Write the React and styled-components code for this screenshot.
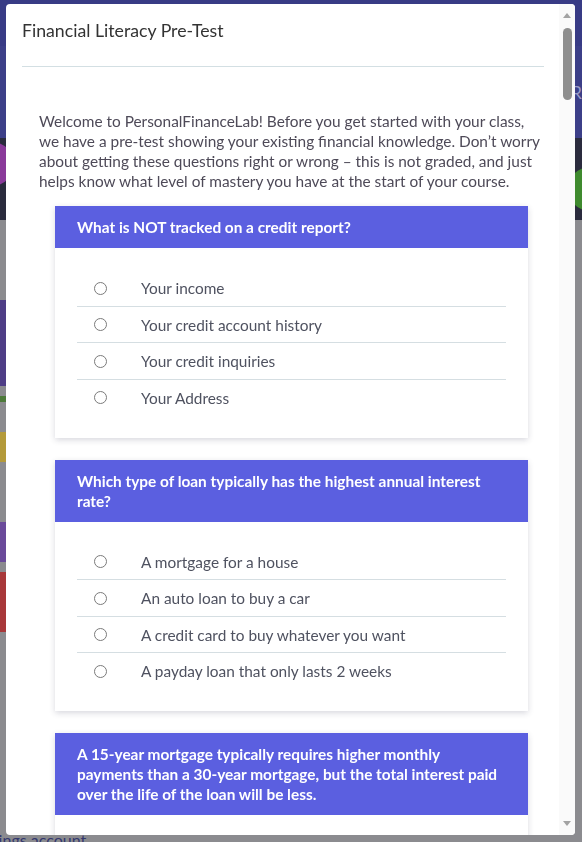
import React from "react";
import styled, { createGlobalStyle } from "styled-components";

const GlobalStyle = createGlobalStyle`
  html, body {
    margin: 0;
    padding: 0;
    height: 100%;
    overflow: hidden;
  }
  body {
    font-family: Lato, "Open Sans", Arial, sans-serif;
    background: #8b8b8f;
  }
`;

/* --- dimmed page behind the modal --- */

const Backdrop = styled.div`
  display: flex;
  flex-direction: column;
  height: 842px;
  overflow: hidden;
`;

const NavBand = styled.div`
  height: 46px;
  background: #383b85;
`;

const SubBand = styled.div`
  height: 92px;
  background: #3c3f88;
  display: flex;
  justify-content: flex-end;
  align-items: center;
  color: #9a9cc8;
  font-size: 17px;
`;

const DarkBand = styled.div`
  height: 82px;
  background: #2a2b3d;
  display: flex;
  justify-content: space-between;
  align-items: center;
`;

const Blob = styled.div`
  width: 44px;
  height: 44px;
  border-radius: 50%;
  background: ${p => p.color};
  margin: ${p => p.margin};
`;

const GrayBand = styled.div`
  flex: 1;
  display: flex;
  flex-direction: column;
`;

const SideTiles = styled.div`
  display: flex;
  flex-direction: column;
  width: 20px;
  padding-top: 80px;
  flex: 1;
`;

const Tile = styled.div`
  height: ${p => p.h}px;
  background: ${p => p.color};
  margin-bottom: ${p => p.gap || 0}px;
`;

const BottomText = styled.div`
  margin-left: -26px;
  margin-bottom: -8px;
  font-size: 16px;
  line-height: 20px;
  color: #34386e;
  white-space: nowrap;
`;

/* --- modal --- */

const Modal = styled.div`
  position: fixed;
  top: 4px;
  left: 6px;
  width: 569px;
  height: 831px;
  background: #fff;
  border-radius: 4px;
  display: flex;
  overflow: hidden;
`;

const Content = styled.div`
  flex: 1;
  overflow: hidden;
`;

const Header = styled.div`
  margin: 0 15px 0 16px;
  padding: 15px 0 23px;
  border-bottom: 1px solid #d3dfe3;
`;

const Title = styled.h1`
  margin: 0;
  font-size: 17.7px;
  line-height: 24px;
  font-weight: 400;
  color: #333333;
`;

const Body = styled.div`
  margin: 0 15px 0 16px;
  padding-top: 44px;
`;

const Intro = styled.p`
  margin: 0 4px 15px 17px;
  font-size: 15.4px;
  line-height: 20px;
  color: #4e4a58;
`;

const Card = styled.div`
  margin: 0 16px 22px 33px;
  background: #fff;
  box-shadow: 0 2px 6px rgba(40, 40, 70, 0.18);
`;

const Question = styled.div`
  background: #5b5fe0;
  color: #fff;
  font-weight: 700;
  font-size: 15.4px;
  line-height: 20px;
  padding: 11px 22px;
`;

const Options = styled.div`
  padding: 22px 22px 22.5px;
`;

const Option = styled.label`
  display: flex;
  align-items: center;
  padding: 8px 0 7.5px 17px;
  font-size: 15.4px;
  line-height: 20px;
  color: #4f5260;
  & + & {
    border-top: 1px solid #d5dee2;
  }
`;

const Radio = styled.span`
  width: 11px;
  height: 11px;
  border: 1px solid #7b7b7b;
  border-radius: 50%;
  margin-right: 34px;
  flex-shrink: 0;
`;

/* --- scrollbar --- */

const ScrollTrack = styled.div`
  width: 16px;
  background: #fafafa;
  display: flex;
  flex-direction: column;
  align-items: center;
  padding: 9px 0 9px;
`;

const Arrow = styled.div`
  width: 0;
  height: 0;
  border-left: 4px solid transparent;
  border-right: 4px solid transparent;
  ${p =>
    p.down
      ? "border-top: 5px solid #a3a3a3;"
      : "border-bottom: 5px solid #a3a3a3;"}
`;

const Thumb = styled.div`
  width: 9px;
  height: 72px;
  border-radius: 5px;
  background: #8e8e8e;
  margin-top: 10px;
`;

const Spacer = styled.div`
  flex: 1;
`;

const questions = [
  {
    q: "What is NOT tracked on a credit report?",
    options: [
      "Your income",
      "Your credit account history",
      "Your credit inquiries",
      "Your Address",
    ],
  },
  {
    q: "Which type of loan typically has the highest annual interest rate?",
    options: [
      "A mortgage for a house",
      "An auto loan to buy a car",
      "A credit card to buy whatever you want",
      "A payday loan that only lasts 2 weeks",
    ],
  },
  {
    q: "A 15-year mortgage typically requires higher monthly payments than a 30-year mortgage, but the total interest paid over the life of the loan will be less.",
    options: ["True", "False"],
  },
];

export default function App() {
  return (
    <>
      <GlobalStyle />
      <Backdrop>
        <NavBand />
        <SubBand>R</SubBand>
        <DarkBand>
          <Blob color="#8a3a9a" margin="-30px 0 0 -30px" />
          <Blob color="#3f8a2e" margin="20px -30px 0 0" />
        </DarkBand>
        <GrayBand>
          <SideTiles>
            <Tile h={86} color="#4e3d86" gap={10} />
            <Tile h={6} color="#4d7a3a" gap={30} />
            <Tile h={30} color="#b49a3a" gap={60} />
            <Tile h={40} color="#6a4a9a" gap={10} />
            <Tile h={60} color="#a8383a" />
          </SideTiles>
          <BottomText>Savings account</BottomText>
        </GrayBand>
      </Backdrop>

      <Modal>
        <Content>
          <Header>
            <Title>Financial Literacy Pre-Test</Title>
          </Header>
          <Body>
            <Intro>
              Welcome to PersonalFinanceLab! Before you get started with your
              class, we have a pre-test showing your existing financial
              knowledge. Don’t worry about getting these questions right or
              wrong – this is not graded, and just helps know what level of
              mastery you have at the start of your course.
            </Intro>
            {questions.map(item => (
              <Card key={item.q}>
                <Question>{item.q}</Question>
                <Options>
                  {item.options.map(opt => (
                    <Option key={opt}>
                      <Radio />
                      {opt}
                    </Option>
                  ))}
                </Options>
              </Card>
            ))}
          </Body>
        </Content>
        <ScrollTrack>
          <Arrow />
          <Thumb />
          <Spacer />
          <Arrow down />
        </ScrollTrack>
      </Modal>
    </>
  );
}
